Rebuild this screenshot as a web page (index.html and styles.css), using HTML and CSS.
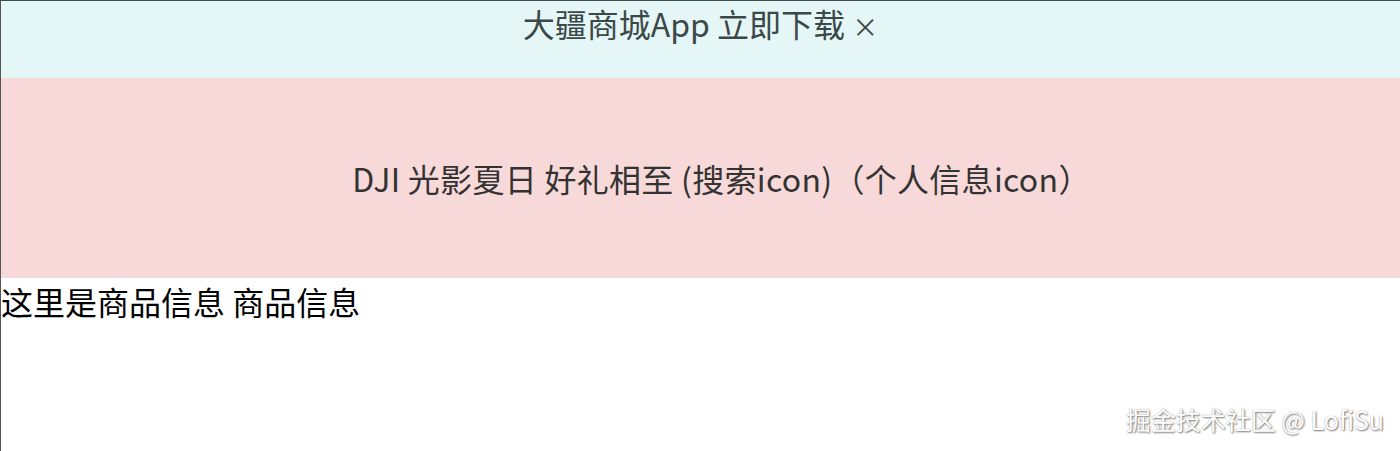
FILE: index.html
```html
<!DOCTYPE html>
<html lang="zh-CN">
<head>
  <meta charset="UTF-8" />
  <meta name="viewport" content="width=device-width, initial-scale=1" />
  <title>大疆商城</title>
  <link rel="stylesheet" href="styles.css">
</head>
<body>
  <div class="page">
    <!-- App download banner -->
    <div class="app-banner">大疆商城App 立即下载 <span class="close">×</span></div>

    <!-- Header -->
    <div class="header">DJI 光影夏日 好礼相至 (搜索icon)（个人信息icon）</div>

    <!-- Product info -->
    <div class="goods">这里是商品信息 商品信息</div>

    <div class="watermark">掘金技术社区 @ LofiSu</div>
  </div>
</body>
</html>
```

FILE: styles.css
```css
/* Basic styling */
html, body {
  margin: 0;
  height: 100%;
}

body {
  font-family: "Noto Sans CJK SC", "Noto Sans", sans-serif;
  font-size: 32px;
  background-color: white;
}

.page {
  position: relative;
  height: 100%;
  box-sizing: border-box;
  border-top: 1px solid #3d4b4b;
  border-left: 1px solid #555;
}

.app-banner {
  height: 77px;
  background-color: #e4f6f6;
  color: #3c4848;
  text-align: center;
  line-height: 44px;
}

.app-banner .close {
  font-size: 26px;
}

.header {
  height: 200px;
  padding-left: 42px;
  background-color: #f8d9d9;
  color: #333;
  display: flex;
  justify-content: center;
  align-items: center;
  letter-spacing: 0.3px;
}

.goods {
  color: #000;
  line-height: 46px;
}

.watermark {
  position: absolute;
  right: 16px;
  bottom: 14px;
  font-size: 25px;
  color: #fff;
  text-shadow: 1px 1px 2px #777, 0 0 1px #999;
}
```
